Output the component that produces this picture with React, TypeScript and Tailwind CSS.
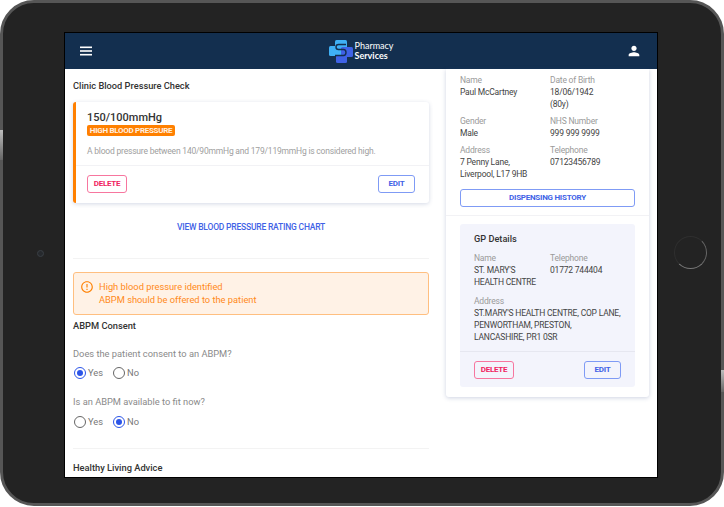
const font = { fontFamily: "Roboto, sans-serif" };

function Field({ label, lines }: { label: string; lines: string[] }) {
  return (
    <div className="text-[8.5px] leading-[12px] tracking-[-0.2px]">
      <p className="text-[#9a9a9a]">{label}</p>
      {lines.map((l) => (
        <p key={l} className="whitespace-nowrap text-[#444]">{l}</p>
      ))}
    </div>
  );
}

function Btn({ kind, label }: { kind: "del" | "edit"; label: string }) {
  return (
    <button
      className={
        kind === "del"
          ? "h-[18px] w-[40px] rounded-[3px] border border-[#f7769f] text-[8px] font-bold tracking-[-0.25px] text-[#f0235f]"
          : "h-[18px] w-[37px] rounded-[3px] border border-[#7f9bf5] text-[8px] font-bold tracking-[-0.25px] text-[#3f62e6]"
      }
    >
      {label}
    </button>
  );
}

function Radio({ on, label }: { on?: boolean; label: string }) {
  return (
    <div className="flex items-center gap-[2px]">
      <span
        className={
          on
            ? "flex h-[12px] w-[12px] items-center justify-center rounded-full border border-[#2c55e8]"
            : "h-[12px] w-[12px] rounded-full border border-[#666]"
        }
      >
        {on && <span className="h-[6px] w-[6px] rounded-full bg-[#2c55e8]" />}
      </span>
      <span className="text-[9.3px] text-[#777]">{label}</span>
    </div>
  );
}

function Logo() {
  return (
    <div className="flex items-center gap-[2px]">
      <svg width="24" height="23" viewBox="0 0 24 23">
        <rect x="6" y="0" width="12" height="8" rx="1.5" fill="#3fb0f5" />
        <rect x="0" y="6" width="12" height="10" rx="1.5" fill="#3fb0f5" />
        <rect x="12" y="7" width="12" height="10" rx="1.5" fill="#3f62e6" />
        <rect x="7" y="15" width="11" height="8" rx="1.5" fill="#3f62e6" />
        <path d="M17 4.5H9.5Q7 4.5 7 7T9.5 9.5H14.5Q17 9.5 17 12.5T14.5 15.5H6" fill="none" stroke="#132f4f" strokeWidth="1.4" />
      </svg>
      <div className="text-white" style={{ fontFamily: "Lato, sans-serif" }}>
        <p className="text-[9px] leading-[10px]">Pharmacy</p>
        <p className="text-[9px] font-bold leading-[10px]">Services</p>
      </div>
    </div>
  );
}

export default function App() {
  return (
    <div className="relative h-[507px] w-[724px] overflow-hidden bg-white" style={font}>
      <div className="flex h-[506px] w-[724px] rounded-[34px] border-[3px] border-[#565656] bg-[#232323] pt-[30px]">
        <div className="flex h-[444px] w-[62px] items-center justify-center pb-[4px] pl-[13px]">
          <span className="h-[7px] w-[7px] rounded-full border border-[#3a3f45] bg-[#26292d]" />
        </div>

        <div className="h-[444px] w-[592px] overflow-hidden bg-white outline outline-1 outline-black">
          <header className="flex h-[36px] items-center justify-between bg-[#132f4f] pl-[15px] pr-[15px]">
            <div className="w-[16px]">
              <svg width="12" height="10" viewBox="0 0 12 10" fill="white">
                <rect y="0.5" width="12" height="1.6" />
                <rect y="4.2" width="12" height="1.6" />
                <rect y="7.9" width="12" height="1.6" />
              </svg>
            </div>
            <Logo />
            <svg width="16" height="16" viewBox="0 0 24 24" fill="white">
              <path d="M12 12c2.21 0 4-1.79 4-4s-1.79-4-4-4-4 1.79-4 4 1.79 4 4 4zm0 2c-2.67 0-8 1.34-8 4v2h16v-2c0-2.66-5.33-4-8-4z" />
            </svg>
          </header>

          <div className="flex h-[408px] gap-[17px] pl-[8px]">
            <div className="w-[356px]">
              <h2 className="mt-[10px] text-[9.25px] font-medium leading-[13px] text-[#333]">Clinic Blood Pressure Check</h2>

              <div className="mt-[10px] h-[101px] rounded-[3px] border-l-[3px] border-[#ff8000] bg-white shadow-[0_1px_4px_rgba(60,80,140,0.22)]">
                <div className="h-[64px] border-b border-[#f2f2f5] pl-[11px] pt-[10px]">
                  <p className="text-[11px] font-medium leading-[12px] text-[#333]">150/100mmHg</p>
                  <span className="mt-[1px] block w-[88px] rounded-[2px] bg-[#ff8000] text-center text-[8px] font-bold leading-[11px] tracking-[-0.3px] text-[#fff0e0]">
                    HIGH BLOOD PRESSURE
                  </span>
                  <p className="mt-[9px] text-[8.5px] leading-[12px] tracking-[-0.2px] text-[#a0a0a0]">
                    A blood pressure between 140/90mmHg and 179/119mmHg is considered high.
                  </p>
                </div>
                <div className="flex justify-between pl-[11px] pr-[14px] pt-[9px]">
                  <Btn kind="del" label="DELETE" />
                  <Btn kind="edit" label="EDIT" />
                </div>
              </div>

              <p className="mt-[18px] text-center text-[8.5px] font-medium leading-[12px] tracking-[-0.2px] text-[#3f62e6]">
                VIEW BLOOD PRESSURE RATING CHART
              </p>

              <div className="mt-[25px] border-t border-[#f3f3f3]" />

              <div className="mt-[13px] flex h-[43px] items-start gap-[5px] rounded-[3px] border border-[#ffbf80] bg-[#fff2e6] pl-[6px] pt-[7px]">
                <svg width="14" height="14" viewBox="0 0 24 24" fill="#ff8000">
                  <path d="M11 15h2v2h-2zm0-8h2v6h-2zm.99-5C6.47 2 2 6.48 2 12s4.47 10 9.99 10C17.52 22 22 17.52 22 12S17.52 2 11.99 2zM12 20c-4.42 0-8-3.58-8-8s3.58-8 8-8 8 3.58 8 8-3.58 8-8 8z" />
                </svg>
                <div className="text-[9.3px] leading-[13px] text-[#ff8a1a]">
                  <p>High blood pressure identified</p>
                  <p>ABPM should be offered to the patient</p>
                </div>
              </div>

              <h3 className="mt-[5px] text-[9.3px] font-medium leading-[12px] text-[#333]">ABPM Consent</h3>
              <p className="mt-[16px] text-[9.3px] leading-[12px] text-[#8a8a8a]">Does the patient consent to an ABPM?</p>
              <div className="mt-[6px] flex gap-[10px] pl-[1px]">
                <Radio on label="Yes" />
                <Radio label="No" />
              </div>
              <p className="mt-[16px] text-[9.3px] leading-[12px] text-[#8a8a8a]">Is an ABPM available to fit now?</p>
              <div className="mt-[7px] flex gap-[10px] pl-[1px]">
                <Radio label="Yes" />
                <Radio on label="No" />
              </div>

              <div className="mt-[19px] border-t border-[#f3f3f3]" />
              <h3 className="mt-[13px] text-[9.3px] font-medium leading-[12px] text-[#333]">Healthy Living Advice</h3>
            </div>

            <aside className="h-[328px] w-[203px] rounded-b-[3px] bg-white shadow-[0_1px_4px_rgba(60,80,140,0.25)]">
              <div className="grid grid-cols-[90px_1fr] gap-y-[5px] px-[14px] pt-[5px]">
                <Field label="Name" lines={["Paul McCartney"]} />
                <Field label="Date of Birth" lines={["18/06/1942", "(80y)"]} />
                <Field label="Gender" lines={["Male"]} />
                <Field label="NHS Number" lines={["999 999 9999"]} />
                <Field label="Address" lines={["7 Penny Lane,", "Liverpool, L17 9HB"]} />
                <Field label="Telephone" lines={["07123456789"]} />
              </div>
              <div className="px-[14px] pb-[8px] pt-[3px]">
                <button className="h-[18px] w-full rounded-[3px] border border-[#7f9bf5] text-[8px] font-bold tracking-[-0.25px] text-[#3f62e6]">
                  DISPENSING HISTORY
                </button>
              </div>
              <div className="border-t border-[#f2f2f5] px-[14px] pt-[8px]">
                <div className="h-[163px] rounded-[3px] bg-[#f3f4fc]">
                  <div className="h-[128px] border-b border-[#e6e7f0] px-[14px] pt-[9px]">
                    <h4 className="text-[9.2px] font-medium leading-[12px] text-[#333]">GP Details</h4>
                    <div className="mt-[7px] grid grid-cols-[76px_1fr]">
                      <Field label="Name" lines={["ST. MARY'S", "HEALTH CENTRE"]} />
                      <Field label="Telephone" lines={["01772 744404"]} />
                    </div>
                    <div className="mt-[7px]">
                      <Field label="Address" lines={["ST.MARY'S HEALTH CENTRE, COP LANE,", "PENWORTHAM, PRESTON,", "LANCASHIRE, PR1 0SR"]} />
                    </div>
                  </div>
                  <div className="flex justify-between px-[14px] pt-[9px]">
                    <Btn kind="del" label="DELETE" />
                    <Btn kind="edit" label="EDIT" />
                  </div>
                </div>
              </div>
            </aside>
          </div>
        </div>

        <div className="flex h-[444px] w-[61px] items-center justify-center pb-[6px] pl-[5px]">
          <span className="h-[33px] w-[33px] rounded-full border border-[#2f2f2f] border-b-[#777] border-r-[#666]" />
        </div>
      </div>
      {/* side buttons on the device edge */}
      <span className="absolute left-0 top-[130px] h-[30px] w-[3px] bg-gradient-to-b from-[#bdbdbd] to-[#666]" />
      <span className="absolute right-0 top-[370px] h-[22px] w-[3px] bg-gradient-to-b from-[#bdbdbd] to-[#666]" />
    </div>
  );
}
